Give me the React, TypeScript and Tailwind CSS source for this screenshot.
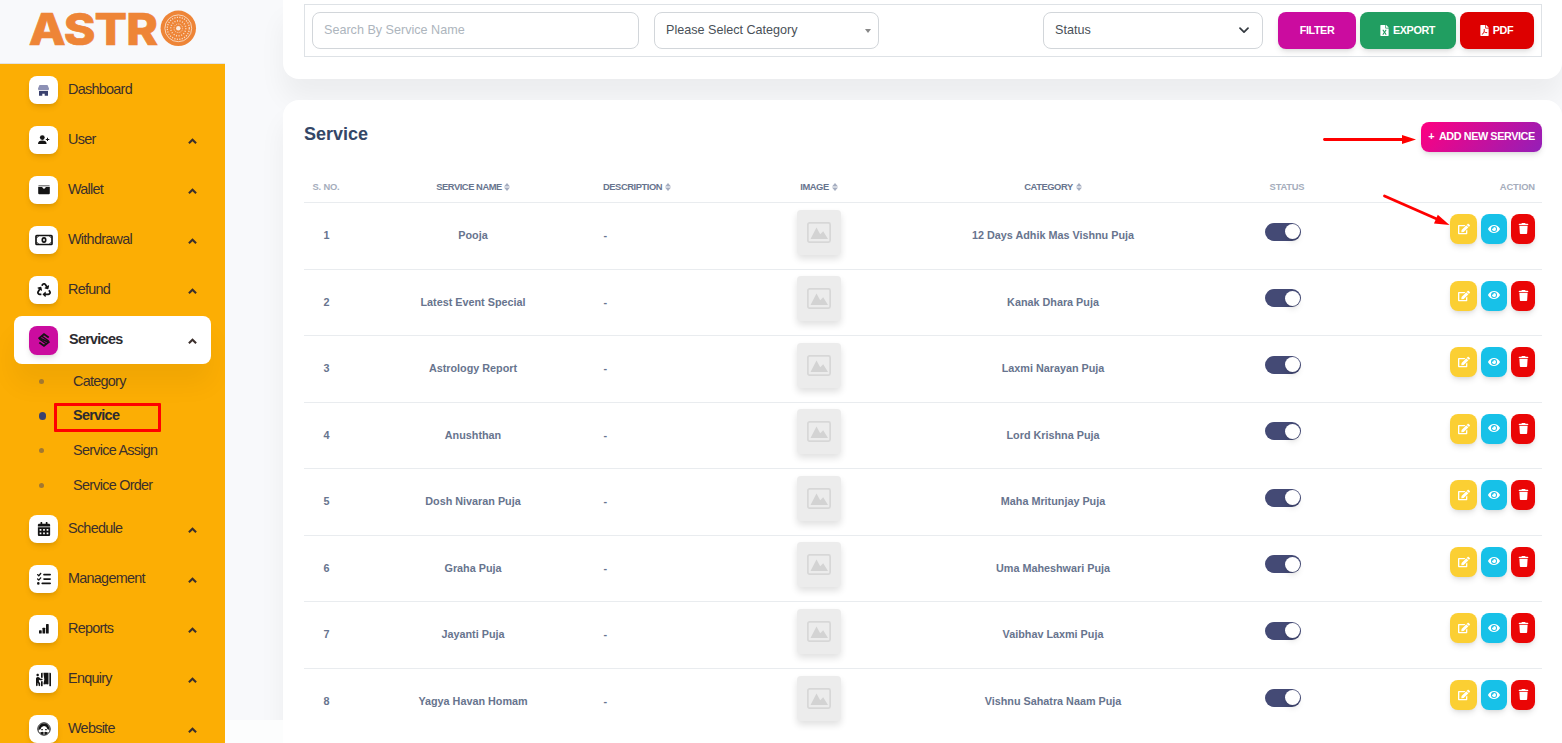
import type { ReactNode } from 'react';
import { FaCalendarAlt, FaEdit, FaEye, FaFileExcel, FaFilePdf, FaPersonBooth, FaRecycle } from 'react-icons/fa';
import { FaListCheck, FaTrash } from 'react-icons/fa6';

interface NavItemProps {
  label: string;
  icon: ReactNode;
  active?: boolean;
  expandable?: boolean;
}

const ShopIcon = () => (
  <svg width="11" height="11" viewBox="0 0 11 11">
    <path d="M1.500 0h8L11 3.400c0 1.200-.6 1.900-1.400 1.900H1.400C.6 5.300 0 4.600 0 3.400z" fill="#8d91b5" />
    <path d="M1 5.900h9v4.800H6.700V8.700H4.300v2H1z" fill="#3a416f" />
  </svg>
);

const UserIcon = () => (
  <svg width="12" height="10" viewBox="0 0 12 10" fill="#141414">
    <circle cx="4.300" cy="2.600" r="2.400" />
    <path d="M0 9c0-2.500 1.500-3.500 4.300-3.500S8.600 6.500 8.600 9z" />
    <path d="M9 2.800h1v1.100h1.300v1H10V6H9V4.900H7.800v-1H9z" />
  </svg>
);

const WalletIcon = () => (
  <svg width="12" height="10" viewBox="0 0 12 10" fill="#141414">
    <path d="M.8.600h10.400q.6 0 .6.700H.2q0-.7.6-.7z" />
    <path d="M.2 2.100h3.600c.5 0 .8.300 1 .8.400 1 2 1 2.400 0 .2-.5.500-.8 1-.8h3.600v6.200q0 1-1 1H1.200q-1 0-1-1z" />
  </svg>
);

const CashIcon = () => (
  <svg width="18" height="12" viewBox="0 0 18 12" fill="none" stroke="#141414">
    <rect x="1" y="1.500" width="16" height="9" rx=".8" strokeWidth="1.700" />
    <path d="M1.500 3.500Q3.500 3.500 3.500 1.500M16.500 3.500Q14.500 3.500 14.500 1.500M1.500 8.500Q3.500 8.500 3.500 10.500M16.500 8.500Q14.500 8.500 14.500 10.500" strokeWidth=".8" />
    <ellipse cx="9" cy="6" rx="1.700" ry="2.200" strokeWidth="1.700" />
  </svg>
);

const LayersIcon = () => (
  <svg width="12" height="14" viewBox="0 0 12 14" fill="none" stroke="#141414" strokeWidth="1.800">
    <path d="M10.700 4.600 6 1.200 1.300 5l9.400 4.200L6 12.800 1.300 9.400" />
    <path d="M3.700 3.200 10.700 8M1.300 6 8.300 10.900" strokeWidth="1.400" />
  </svg>
);

const BarsIcon = () => (
  <svg width="10" height="10" viewBox="0 0 10 10" fill="#141414">
    <rect x="0" y="6.300" width="2.700" height="3.300" rx=".6" />
    <rect x="3.500" y="3.700" width="2.700" height="5.900" rx=".6" />
    <rect x="7" y=".1" width="2.700" height="9.500" rx=".6" />
  </svg>
);

const WebsiteIcon = () => (
  <svg width="14" height="14" viewBox="0 0 14 14">
    <circle cx="7" cy="7" r="6.200" fill="#fff" stroke="#141414" strokeWidth="1" />
    <path d="M1.400 8C1.500 3.500 4 1.600 7 1.600S12.500 3.500 12.600 8L10.500 7.200 9.200 4.700 7 3.900 4.600 4.900 3.500 7.200z" fill="#141414" />
    <path d="M4.300 7h1.500v1.300H4.300zM8.200 7h1.500v1.300H8.200zM3 10.500l2.500-.7 1.500 1 1.500-1 2.500.7-1.500 1.700L7.600 13V11.200H6.400V13l-2-.8z" fill="#141414" />
  </svg>
);

const Caret = () => (
  <svg width="9" height="6" viewBox="0 0 9 6" fill="none" stroke="#3b2f2c" strokeWidth="2.100">
    <path d="M.9 5.200 4.500 1.700l3.600 3.500" />
  </svg>
);

const SortIcon = () => (
  <svg width="6" height="8" viewBox="0 0 6 8" fill="#a5adc0">
    <path d="M3 0 6 3.400H0zM3 8 6 4.600H0z" />
  </svg>
);

function NavItem({ label, icon, active = false, expandable = true }: NavItemProps) {
  return (
    <a
      className={
        active
          ? 'flex h-12 shrink-0 items-center rounded-lg bg-white pl-[15px] pr-3.5 font-bold text-[#2b2b30] shadow-[0_20px_27px_0_rgba(0,0,0,0.05)]'
          : 'mb-0.5 flex h-12 shrink-0 items-center pl-[15px] pr-3.5 text-[#3b2f2c]'
      }
    >
      <span
        className={
          active
            ? 'flex h-[29px] w-[29px] items-center justify-center rounded-lg bg-[#cb0c9f] shadow-md'
            : 'flex h-7 w-[29px] items-center justify-center rounded-lg bg-white text-[#141414] shadow-md'
        }
      >
        {icon}
      </span>
      <span className={active ? 'ml-[11px] flex-1 pb-[2.700px] text-[14.4px] leading-5 tracking-[-0.72px]' : 'ml-2.5 flex-1 pb-[2.700px] text-[14.4px] leading-5 tracking-[-0.72px]'}>
        {label}
      </span>
      {expandable && <span className="pt-0.5"><Caret /></span>}
    </a>
  );
}

const subItems = ['Category', 'Service', 'Service Assign', 'Service Order'];

function Sidebar() {
  return (
    <aside className="flex w-[225px] shrink-0 flex-col">
      <div className="h-16 shrink-0 border-b border-[#e3e3e3] pl-[29px]">
        <svg width="180" height="60" viewBox="0 0 180 60" className="overflow-visible">
          <g fill="#ee8537" stroke="#ee8537" strokeWidth=".7" fontFamily="Inter, sans-serif" fontWeight="800" fontSize="44.500">
            <text x="-.3" y="45" textLength="128.500" lengthAdjust="spacingAndGlyphs" letterSpacing="-.8">
              ASTR
            </text>
          </g>
          <circle cx="149.300" cy="28.300" r="17.700" fill="#ee8537" />
          <g fill="none" stroke="#f8dcc6">
            <circle cx="149.300" cy="28.300" r="13.400" strokeWidth=".9" />
            <circle cx="149.300" cy="28.300" r="11" strokeWidth="1.300" strokeDasharray="1.200 1.300" />
            <circle cx="149.300" cy="28.300" r="7.500" strokeWidth="1.500" strokeDasharray="1 1.600" />
            <circle cx="149.300" cy="28.300" r="4.300" strokeWidth="1" strokeDasharray="1 1.200" />
          </g>
          <circle cx="149.300" cy="28.300" r="2.200" fill="#fbeadd" />
        </svg>
      </div>
      <nav className="flex flex-1 flex-col overflow-hidden bg-[#fcae04] px-3.5 pt-0.5">
        <NavItem label="Dashboard" icon={<ShopIcon />} expandable={false} />
        <NavItem label="User" icon={<UserIcon />} />
        <NavItem label="Wallet" icon={<WalletIcon />} />
        <NavItem label="Withdrawal" icon={<CashIcon />} />
        <NavItem label="Refund" icon={<FaRecycle size={14} />} />
        <NavItem label="Services" icon={<LayersIcon />} active />
        <ul className="mb-[2.700px] shrink-0">
          {subItems.map((item) => {
            const current = item === 'Service';
            return (
              <li key={item} className="flex h-[34.67px] items-center pl-[25px] text-[14.4px] tracking-[-0.72px] text-[#3b2f2c]">
                <span className="flex w-[34px] items-center">
                  <span className={current ? 'h-2 w-[7px] rounded-full bg-[#3a416f]' : 'h-[5px] w-[5px] rounded-full bg-[#a27831]'} />
                </span>
                <span className={current ? 'font-bold text-[#2b2b30]' : 'pt-px'}>{item}</span>
              </li>
            );
          })}
        </ul>
        <NavItem label="Schedule" icon={<FaCalendarAlt size={14} />} />
        <NavItem label="Management" icon={<FaListCheck size={14} />} />
        <NavItem label="Reports" icon={<BarsIcon />} />
        <NavItem label="Enquiry" icon={<FaPersonBooth size={15} />} />
        <NavItem label="Website" icon={<WebsiteIcon />} />
      </nav>
    </aside>
  );
}

function Filters() {
  return (
    <section className="h-[79px] rounded-b-2xl bg-white pl-[21px] pr-5 pt-1 shadow-[0_20px_27px_0_rgba(0,0,0,0.05)]">
      <div className="flex h-[53px] items-center border border-[#dee2e6] px-[7px] text-[12.6px] text-[#495057]">
        <div className="flex h-[37px] w-[327px] items-center rounded-lg border border-[#d2d6da] px-[11px] text-[#adb5bd]">
          Search By Service Name
        </div>
        <div className="ml-[15px] flex h-[37px] w-[225px] items-center justify-between rounded-lg border border-[#d2d6da] pl-[11px] pr-[7px]">
          Please Select Category
          <svg width="6" height="4" viewBox="0 0 6 4" fill="#888"><path d="M0 0h6L3 4z" /></svg>
        </div>
        <div className="ml-auto flex h-[37px] w-[220px] items-center justify-between rounded-lg border border-[#d2d6da] pl-[11px] pr-[13px]">
          Status
          <svg width="10" height="7" viewBox="0 0 10 7" fill="none" stroke="#343a40" strokeWidth="1.700" strokeLinecap="round" strokeLinejoin="round">
            <path d="M1 1.200l4 4 4-4" />
          </svg>
        </div>
        <div className="ml-[15px] flex gap-1 text-[10.800px] font-bold tracking-[-0.4px] text-white">
          <button className="h-[37px] w-[78px] rounded-lg bg-[#cb0c9f] shadow-md">FILTER</button>
          <button className="flex h-[37px] w-24 items-center justify-center gap-[3px] rounded-lg bg-[#219e61] pr-0.5 shadow-md">
            <FaFileExcel size={11} />EXPORT
          </button>
          <button className="flex h-[37px] w-[74px] items-center justify-center gap-[3px] rounded-lg bg-[#dd0000] pr-0.5 shadow-md">
            <FaFilePdf size={11} />PDF
          </button>
        </div>
      </div>
    </section>
  );
}

const services = [
  { name: 'Pooja', category: '12 Days Adhik Mas Vishnu Puja' },
  { name: 'Latest Event Special', category: 'Kanak Dhara Puja' },
  { name: 'Astrology Report', category: 'Laxmi Narayan Puja' },
  { name: 'Anushthan', category: 'Lord Krishna Puja' },
  { name: 'Dosh Nivaran Puja', category: 'Maha Mritunjay Puja' },
  { name: 'Graha Puja', category: 'Uma Maheshwari Puja' },
  { name: 'Jayanti Puja', category: 'Vaibhav Laxmi Puja' },
  { name: 'Yagya Havan Homam', category: 'Vishnu Sahatra Naam Puja' },
];

const columns = 'grid grid-cols-[44px_250px_131px_180px_288px_172px_1fr]';

function ServiceRow({ index, name, category }: { index: number; name: string; category: string }) {
  return (
    <div className={`${columns} h-[66.580px] border-b border-[#e9ecef] text-center text-[10.800px] font-bold leading-[64.600px] text-[#67748e] last:border-b-0`}>
      <span className="pl-px">{index}</span>
      <span>{name}</span>
      <span className="pl-[5.500px] text-left">-</span>
      <span className="flex justify-center pt-[6.500px]">
        <span className="flex h-[45px] w-11 justify-center rounded bg-[#ececec] pt-3 shadow-[0_4px_7px_rgba(0,0,0,0.12)]">
          <svg width="24" height="21" viewBox="0 0 24 21">
            <rect x=".9" y=".9" width="22.200" height="19.200" rx="1.500" fill="none" stroke="#d7d7d7" strokeWidth="1.700" />
            <path d="M3.500 17 9.500 5.500l3.700 6.800 3-3L21 17z" fill="#d3d3d3" />
          </svg>
        </span>
      </span>
      <span>{category}</span>
      <span className="flex justify-center pt-[19.500px]">
        <span className="flex h-[18px] w-9 items-center justify-end rounded-full bg-[#444a75] pr-px">
          <span className="h-[15px] w-[15px] rounded-full bg-white shadow-md" />
        </span>
      </span>
      <span className="flex justify-end gap-1 pr-[7px] pt-[11px] text-white">
        <button className="flex h-[30px] w-[27px] items-center justify-center rounded-lg bg-[#fbcf33] shadow-md"><FaEdit size={12} /></button>
        <button className="flex h-[30px] w-[26px] items-center justify-center rounded-lg bg-[#17c1e8] pb-px shadow-md"><FaEye size={12} /></button>
        <button className="flex h-[30px] w-6 items-center justify-center rounded-lg bg-[#ea0606] pb-px shadow-md"><FaTrash size={11} /></button>
      </span>
    </div>
  );
}

function ServiceTable() {
  return (
    <section className="mt-[21px] h-[700px] rounded-t-2xl bg-white pl-[21px] pr-5 pt-[22px] shadow-[0_20px_27px_0_rgba(0,0,0,0.05)]">
      <div className="flex h-[30px] items-start justify-between">
        <h1 className="text-[18px] font-bold leading-6 text-[#344767]">Service</h1>
        <button className="h-[30px] w-[121px] whitespace-pre rounded-lg bg-[linear-gradient(310deg,#931fb8,#ff0080)] pb-0.5 text-[10.800px] font-bold tracking-[-0.4px] text-white shadow-md">
          +  ADD NEW SERVICE
        </button>
      </div>
      <div className={`${columns} mt-[18px] h-[33px] border-b border-[#e9ecef] text-center text-[9.360px] font-bold leading-[34px] tracking-[-0.44px] text-[#67748e]`}>
        <span className="text-[#a5adbc] tracking-[-0.2px]">S. NO.</span>
        <span className="flex items-center justify-center gap-0.5">SERVICE NAME <SortIcon /></span>
        <span className="flex items-center gap-[3px] pl-[5px]">DESCRIPTION <SortIcon /></span>
        <span className="flex items-center justify-center gap-[3px]">IMAGE <SortIcon /></span>
        <span className="flex items-center justify-center gap-[3px]">CATEGORY <SortIcon /></span>
        <span className="pl-2 text-[#a5adbc] tracking-[-0.2px]">STATUS</span>
        <span className="pr-[7px] text-right text-[#a5adbc] tracking-[-0.1px]">ACTION</span>
      </div>
      <div>
        {services.map((service, i) => (
          <ServiceRow key={service.name} index={i + 1} name={service.name} category={service.category} />
        ))}
      </div>
    </section>
  );
}

export default function App() {
  return (
    <div className="relative flex h-[743px] w-[1562px] overflow-hidden bg-[#f8f9fb] font-['Liberation_Sans',Arial,sans-serif]">
      <Sidebar />
      <main className="order-last w-[1279px] shrink-0">
        <Filters />
        <ServiceTable />
      </main>
      <div className="z-10 flex w-[58px] shrink-0 flex-col justify-end">
        <div className="h-[23px] bg-[#fcfdfd]" />
      </div>

      {/* callouts drawn over the page */}
      <div className="absolute left-[54px] top-[403px] h-[29px] w-[107px] rounded-[1px] border-[3px] border-[#ff0000]" />
      <svg className="pointer-events-none absolute left-[1320px] top-[130px]" width="140" height="100" viewBox="0 0 140 100">
        <g stroke="#ff0000" strokeWidth="2.800" strokeLinecap="round">
          <path d="M4.500 9.500H84" />
          <path d="M64.500 66 118 89.500" />
        </g>
        <g fill="#ff0000">
          <path d="M82 5 96 9.500 82 14z" />
          <path d="M129.500 95 114 93.500l3.800-8.800z" />
        </g>
      </svg>
    </div>
  );
}
